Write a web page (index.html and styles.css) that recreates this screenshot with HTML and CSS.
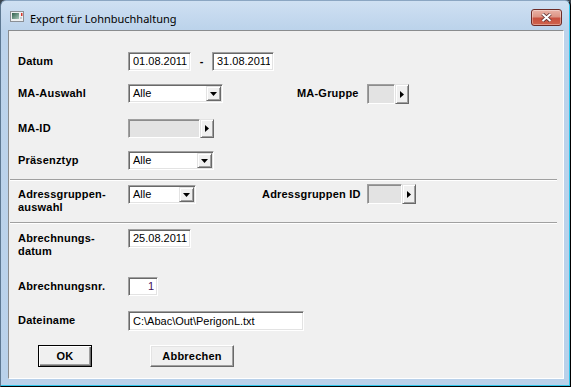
FILE: index.html
```html
<!DOCTYPE html>
<html lang="de">
<head>
    <meta charset="UTF-8">
    <meta name="viewport" content="width=device-width, initial-scale=1.0">
    <title>Export für Lohnbuchhaltung</title>
    <link rel="stylesheet" href="styles.css">
</head>
<body>
    <div class="window">
        <div class="titlebar">
            <svg class="app-icon" width="14" height="11" viewBox="0 0 14 11">
                <defs>
                    <linearGradient id="screen" x1="0" y1="0" x2="1" y2="1">
                        <stop offset="0" stop-color="#2f5f4c"/>
                        <stop offset="1" stop-color="#a9c9bb"/>
                    </linearGradient>
                </defs>
                <rect x="0.5" y="0.5" width="13" height="10" fill="#eef0f2" stroke="#8b9096"/>
                <rect x="2" y="2" width="7" height="6" fill="url(#screen)"/>
                <rect x="10" y="6" width="2" height="2" fill="#c8ccd0"/>
                <rect x="11" y="2" width="1.5" height="3" fill="#d8332b"/>
            </svg>
            <span class="title">Export für Lohnbuchhaltung</span>
            <button class="close-btn" type="button">
                <svg width="11" height="9" viewBox="0 0 11 9">
                    <path d="M1.5 1 L9.5 8 M9.5 1 L1.5 8" stroke="#5a3030" stroke-width="3.6"/>
                    <path d="M1.5 1 L9.5 8 M9.5 1 L1.5 8" stroke="#fff" stroke-width="2"/>
                </svg>
            </button>
        </div>

        <div class="client">
            <div class="row row-datum">
                <label class="label">Datum</label>
                <input class="edit w-date" type="text" value="01.08.2011" readonly>
                <span class="dash">-</span>
                <input class="edit w-date2" type="text" value="31.08.2011" readonly>
            </div>

            <div class="row row-ma">
                <label class="label">MA-Auswahl</label>
                <div class="combo w-ma">
                    <span class="combo-text">Alle</span>
                    <span class="combo-btn"><svg width="7" height="4" viewBox="0 0 7 4"><path d="M0 0 H7 L3.5 4 Z" fill="#000"/></svg></span>
                </div>
                <span class="side-label side-gruppe">MA-Gruppe</span>
                <div class="picker">
                    <span class="picker-field w-gruppe"></span>
                    <span class="picker-btn"><svg width="4" height="7" viewBox="0 0 4 7"><path d="M0 0 L4 3.5 L0 7 Z" fill="#000"/></svg></span>
                </div>
            </div>

            <div class="row row-maid">
                <label class="label">MA-ID</label>
                <div class="picker picker-sm">
                    <span class="picker-field w-maid"></span>
                    <span class="picker-btn"><svg width="4" height="7" viewBox="0 0 4 7"><path d="M0 0 L4 3.5 L0 7 Z" fill="#000"/></svg></span>
                </div>
            </div>

            <div class="row row-typ">
                <label class="label">Präsenztyp</label>
                <div class="combo w-typ">
                    <span class="combo-text">Alle</span>
                    <span class="combo-btn"><svg width="7" height="4" viewBox="0 0 7 4"><path d="M0 0 H7 L3.5 4 Z" fill="#000"/></svg></span>
                </div>
            </div>

            <div class="sep sep-1"></div>

            <div class="row row-adr">
                <label class="label label-2">Adressgruppen-<br>auswahl</label>
                <div class="combo w-adr">
                    <span class="combo-text">Alle</span>
                    <span class="combo-btn"><svg width="7" height="4" viewBox="0 0 7 4"><path d="M0 0 H7 L3.5 4 Z" fill="#000"/></svg></span>
                </div>
                <span class="side-label side-adr">Adressgruppen ID</span>
                <div class="picker picker-up">
                    <span class="picker-field w-adrid"></span>
                    <span class="picker-btn"><svg width="4" height="7" viewBox="0 0 4 7"><path d="M0 0 L4 3.5 L0 7 Z" fill="#000"/></svg></span>
                </div>
            </div>

            <div class="sep sep-2"></div>

            <div class="row row-abrdat">
                <label class="label label-2">Abrechnungs-<br>datum</label>
                <input class="edit w-date" type="text" value="25.08.2011" readonly>
            </div>

            <div class="row row-nr">
                <label class="label">Abrechnungsnr.</label>
                <input class="edit w-nr" type="text" value="1" readonly>
            </div>

            <div class="row row-datei">
                <label class="label">Dateiname</label>
                <input class="edit w-datei" type="text" value="C:\Abac\Out\PerigonL.txt" readonly>
            </div>

            <div class="buttons">
                <button class="btn btn-default" type="button">OK</button>
                <button class="btn btn-cancel" type="button">Abbrechen</button>
            </div>
        </div>
    </div>
</body>
</html>
```

FILE: styles.css
```css
body {
    margin: 0;
    background: #3c4650;
}
.window {
    box-sizing: border-box;
    width: 571px;
    height: 387px;
    display: flex;
    flex-direction: column;
    background: linear-gradient(#cfe0f2, #bcd3eb 28px, #b9d1ea);
    border: 1px solid;
    border-color: #8ba6c2 #000 #000 #5d7892;
    border-radius: 6px 6px 0 0;
    box-shadow: inset -1px -1px 0 #2fc6ec;
}
.titlebar {
    height: 29px;
    flex: none;
    display: flex;
    align-items: center;
    padding-left: 9px;
}
.app-icon {
    flex: none;
    margin-top: 2px;
}
.title {
    margin-left: 6px;
    margin-top: 5px;
    font: 11px "Noto Sans", sans-serif;
    color: #000;
}
.close-btn {
    align-self: flex-start;
    margin: 8px 8px 0 auto;
    width: 31px;
    height: 17px;
    box-sizing: border-box;
    padding: 0;
    border: 1px solid #6d2b26;
    border-radius: 3px;
    background: linear-gradient(#eab3a6, #dc9585 45%, #c8513f 55%, #d0634c);
    box-shadow: inset 0 0 0 1px rgba(255, 255, 255, 0.35);
    display: flex;
    align-items: center;
    justify-content: center;
}

/* dialog body */
.client {
    flex: 1;
    margin: 0 6px 7px 7px;
    padding-left: 9px;
    background: #f0f0f0;
    border: 1px solid;
    border-color: #8a8c8e #fff #fff #8a8c8e;
    font: 11px "Liberation Sans", Arial, sans-serif;
    color: #000;
}
.row {
    display: flex;
    align-items: flex-start;
}
.label, .side-label {
    flex: none;
    font-weight: bold;
    letter-spacing: 0.2px;
    line-height: 19px;
}
.label {
    width: 110px;
}
.label-2 {
    line-height: 13px;
    padding-top: 3px;
}
.row-datum { margin-top: 21px; }
.row-ma { margin-top: 13px; }
.row-maid { margin-top: 15px; }
.row-typ { margin-top: 13px; }
.row-adr { margin-top: 4px; }
.row-abrdat { margin-top: 5px; }
.row-nr { margin-top: 19px; }
.row-datei { margin-top: 15px; }

.sep {
    height: 1px;
    background: #a0a0a0;
    border-bottom: 1px solid #fff;
    margin: 9px 6px 0 -8px;
}
.sep-2 {
    margin-top: 8px;
}

.edit {
    box-sizing: border-box;
    height: 19px;
    margin: 0;
    padding: 0 3px 1px 4px;
    border: 1px solid;
    border-color: #a0a0a0 #fff #fff #a0a0a0;
    box-shadow: inset 1px 1px 0 #696969, inset -1px -1px 0 #e3e3e3;
    background: #fff;
    font: 11px "Liberation Sans", Arial, sans-serif;
    color: #000;
    outline: none;
}
.w-date { width: 63px; }
.w-date2 { width: 62px; }
.w-nr {
    width: 30px;
    text-align: right;
    color: #40105a;
}
.w-datei {
    width: 176px;
    height: 20px;
}
.dash {
    width: 21px;
    text-align: center;
    line-height: 19px;
    font-weight: bold;
}

.combo {
    box-sizing: border-box;
    height: 19px;
    display: flex;
    padding: 1px;
    border: 1px solid;
    border-color: #a0a0a0 #fff #fff #a0a0a0;
    box-shadow: inset 1px 1px 0 #696969, inset -1px -1px 0 #e3e3e3;
    background: #fff;
}
.combo-text {
    flex: 1;
    padding-left: 3px;
    line-height: 15px;
}
.combo-btn, .picker-btn {
    flex: none;
    box-sizing: border-box;
    display: flex;
    align-items: center;
    justify-content: center;
    background: #f0f0f0;
    border: 1px solid;
    border-color: #e3e3e3 #696969 #696969 #e3e3e3;
    box-shadow: inset 1px 1px 0 #fff, inset -1px -1px 0 #a0a0a0;
}
.combo-btn {
    width: 15px;
}
.w-ma { width: 95px; }
.w-typ { width: 86px; }
.w-adr { width: 68px; }

.side-gruppe {
    margin-left: 74px;
    width: 70px;
}
.side-adr {
    margin-left: 66px;
    width: 105px;
}

.picker {
    display: flex;
    height: 20px;
}
.picker-sm {
    height: 19px;
}
.picker-up {
    margin-top: -1px;
}
.picker-field {
    box-sizing: border-box;
    border: 1px solid;
    border-color: #a0a0a0 #fff #fff #a0a0a0;
    box-shadow: inset 1px 1px 0 #8c8c8c;
    background: #e3e3e3;
}
.picker-btn {
    width: 14px;
}
.w-gruppe { width: 28px; }
.w-maid { width: 72px; }
.w-adrid { width: 35px; }

.buttons {
    display: flex;
    margin: 14px 0 0 20px;
}
.btn {
    box-sizing: border-box;
    height: 22px;
    padding: 0;
    font: bold 11px "Liberation Sans", Arial, sans-serif;
    letter-spacing: 0.2px;
    color: #000;
    background: #f0f0f0;
    border: 1px solid;
    border-color: #fff #696969 #696969 #fff;
    box-shadow: inset -1px -1px 0 #a0a0a0, inset 1px 1px 0 #e3e3e3;
}
.btn-default {
    width: 54px;
    border-color: #000;
    box-shadow: inset 1px 1px 0 #fff, inset -1px -1px 0 #696969, inset -2px -2px 0 #a0a0a0;
}
.btn-cancel {
    width: 84px;
    margin-left: 58px;
}
```
